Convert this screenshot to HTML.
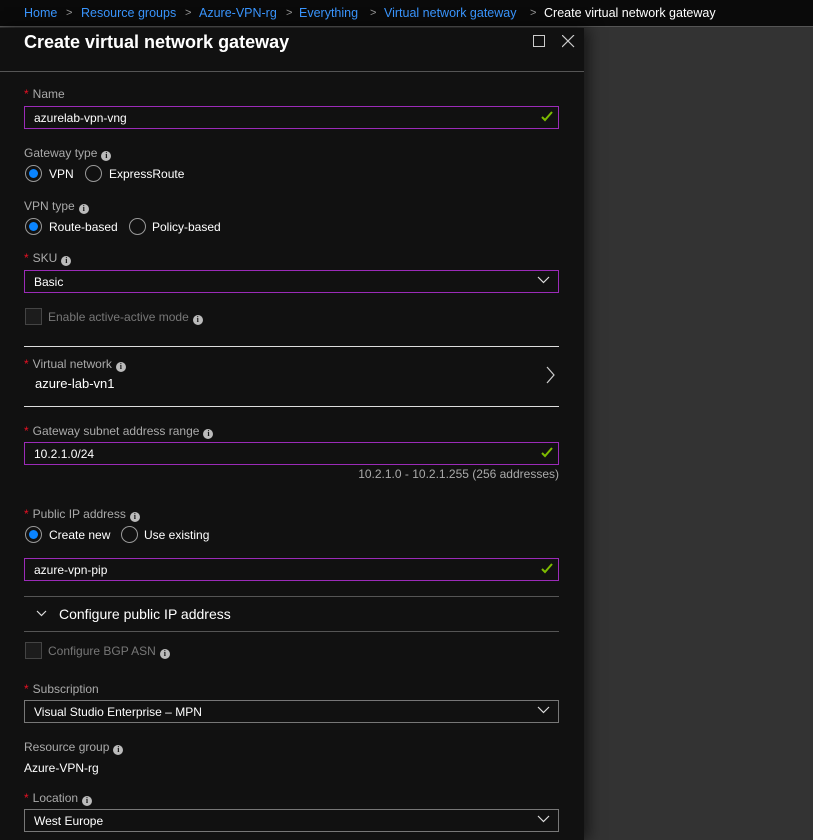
<!DOCTYPE html>
<html><head><meta charset="utf-8"><style>
*{margin:0;padding:0;box-sizing:border-box}
body{width:813px;height:840px;overflow:hidden;background:#333;font-family:"Liberation Sans",sans-serif;position:relative}
.bc{position:absolute;left:0;top:0;width:813px;height:27px;background:#0a0a0a;border-bottom:1px solid #555;font-size:12.5px;color:#fff}
.bc span{position:absolute;top:6px;white-space:nowrap}
.bc .l{color:#3a96ff}
.bc .s{color:#999;font-size:11px;top:7px}
.panel{position:absolute;left:0;top:28px;width:584px;height:812px;background:#111;box-shadow:4px 0 14px rgba(0,0,0,0.6)}
.a{position:absolute;white-space:nowrap}
.lbl{font-size:12px;color:#aaa}
.star{color:#e81123;margin-right:4px}
.info{display:inline-block;width:10px;height:10px;border-radius:50%;background:#bbb;color:#111;font-size:8px;font-weight:bold;text-align:center;line-height:10px;vertical-align:-1px;margin-left:4px;font-family:"Liberation Serif",serif}
.val{font-size:12px;color:#fff}
.inp{position:absolute;left:24px;width:535px;height:23px;border:1px solid #9b2bb8;font-size:12px;color:#fff;padding:4px 9px}
.inp.g{border-color:#777}
.chk{position:absolute;right:5px;top:2px}
.dd{position:absolute;right:8px;top:4px}
.rad{position:absolute;width:17px;height:17px;border-radius:50%;border:1px solid #999}
.rad.on::after{content:"";position:absolute;left:3px;top:3px;width:9px;height:9px;border-radius:50%;background:#0a84ff}
.hr{position:absolute;left:24px;width:535px;height:1px}
.cb{position:absolute;width:17px;height:17px;border:1px solid #444;background:#1c1c1c}
</style></head><body>
<div class="bc">
<span class="l" style="left:24px">Home</span><span class="s" style="left:66px">&gt;</span>
<span class="l" style="left:81px">Resource groups</span><span class="s" style="left:185px">&gt;</span>
<span class="l" style="left:199px">Azure-VPN-rg</span><span class="s" style="left:286px">&gt;</span>
<span class="l" style="left:299px">Everything</span><span class="s" style="left:370px">&gt;</span>
<span class="l" style="left:384px">Virtual network gateway</span><span class="s" style="left:530px">&gt;</span>
<span style="left:544px">Create virtual network gateway</span>
</div>
<div class="panel">
<div class="a" style="left:24px;top:4px;font-size:18px;font-weight:bold;color:#fff">Create virtual network gateway</div>
<svg class="a" style="left:533px;top:7px" width="13" height="13"><rect x="0.5" y="0.5" width="11" height="11" fill="none" stroke="#ccc"/></svg>
<svg class="a" style="left:562px;top:7px" width="13" height="13"><path d="M0 0L12 12M12 0L0 12" stroke="#ccc" stroke-width="1.2"/></svg>
<div class="a" style="left:0;top:43px;width:584px;height:1px;background:#555"></div>
</div>
<div style="position:absolute;left:0;top:0;width:584px;height:840px">
<div class="a lbl" style="left:24px;top:87px"><span class="star">*</span>Name</div>
<div class="inp" style="top:106px">azurelab-vpn-vng<svg class="chk" width="12" height="14" viewBox="0 0 12 14"><path d="M1 8l3 3 7-8" stroke="#7dbb00" stroke-width="2" fill="none"/></svg></div>

<div class="a lbl" style="left:24px;top:146px">Gateway type<span class="info">i</span></div>
<div class="rad on" style="left:25px;top:165px"></div><div class="a val" style="left:49px;top:167px">VPN</div>
<div class="rad" style="left:85px;top:165px"></div><div class="a val" style="left:109px;top:167px">ExpressRoute</div>

<div class="a lbl" style="left:24px;top:199px">VPN type<span class="info">i</span></div>
<div class="rad on" style="left:25px;top:218px"></div><div class="a val" style="left:49px;top:220px">Route-based</div>
<div class="rad" style="left:129px;top:218px"></div><div class="a val" style="left:152px;top:220px">Policy-based</div>

<div class="a lbl" style="left:24px;top:251px"><span class="star">*</span>SKU<span class="info">i</span></div>
<div class="inp" style="top:270px">Basic<svg class="dd" width="13" height="10"><path d="M1 2l5.5 5.5L12 2" stroke="#ddd" fill="none" stroke-width="1.2"/></svg></div>

<div class="cb" style="left:25px;top:308px"></div>
<div class="a lbl" style="left:48px;top:310px;color:#777">Enable active-active mode<span class="info">i</span></div>

<div class="hr" style="top:346px;background:#ddd"></div>
<div class="a lbl" style="left:24px;top:357px"><span class="star">*</span>Virtual network<span class="info">i</span></div>
<div class="a" style="left:35px;top:376px;font-size:13px;color:#fff">azure-lab-vn1</div>
<svg class="a" style="left:545px;top:366px" width="10" height="18"><path d="M2 1l7 8-7 8" stroke="#ccc" fill="none" stroke-width="1.2"/></svg>
<div class="hr" style="top:406px;background:#ddd"></div>

<div class="a lbl" style="left:24px;top:424px"><span class="star">*</span>Gateway subnet address range<span class="info">i</span></div>
<div class="inp" style="top:442px">10.2.1.0/24<svg class="chk" width="12" height="14" viewBox="0 0 12 14"><path d="M1 8l3 3 7-8" stroke="#7dbb00" stroke-width="2" fill="none"/></svg></div>
<div class="a lbl" style="left:0;width:559px;text-align:right;top:467px">10.2.1.0 - 10.2.1.255 (256 addresses)</div>

<div class="a lbl" style="left:24px;top:507px"><span class="star">*</span>Public IP address<span class="info">i</span></div>
<div class="rad on" style="left:25px;top:526px"></div><div class="a val" style="left:49px;top:528px">Create new</div>
<div class="rad" style="left:121px;top:526px"></div><div class="a val" style="left:144px;top:528px">Use existing</div>
<div class="inp" style="top:558px">azure-vpn-pip<svg class="chk" width="12" height="14" viewBox="0 0 12 14"><path d="M1 8l3 3 7-8" stroke="#7dbb00" stroke-width="2" fill="none"/></svg></div>

<div class="hr" style="top:596px;background:#555"></div>
<svg class="a" style="left:36px;top:610px" width="11" height="8"><path d="M1 1l4.5 4.5L10 1" stroke="#ddd" fill="none" stroke-width="1.2"/></svg>
<div class="a" style="left:59px;top:606px;font-size:14px;color:#fff">Configure public IP address</div>
<div class="hr" style="top:631px;background:#555"></div>

<div class="cb" style="left:25px;top:642px"></div>
<div class="a lbl" style="left:48px;top:644px;color:#777">Configure BGP ASN<span class="info">i</span></div>

<div class="a lbl" style="left:24px;top:682px"><span class="star">*</span>Subscription</div>
<div class="inp g" style="top:700px">Visual Studio Enterprise – MPN<svg class="dd" width="13" height="10"><path d="M1 2l5.5 5.5L12 2" stroke="#ddd" fill="none" stroke-width="1.2"/></svg></div>

<div class="a lbl" style="left:24px;top:740px">Resource group<span class="info">i</span></div>
<div class="a val" style="left:24px;top:761px">Azure-VPN-rg</div>

<div class="a lbl" style="left:24px;top:791px"><span class="star">*</span>Location<span class="info">i</span></div>
<div class="inp g" style="top:809px">West Europe<svg class="dd" width="13" height="10"><path d="M1 2l5.5 5.5L12 2" stroke="#ddd" fill="none" stroke-width="1.2"/></svg></div>
</div>
</body></html>
